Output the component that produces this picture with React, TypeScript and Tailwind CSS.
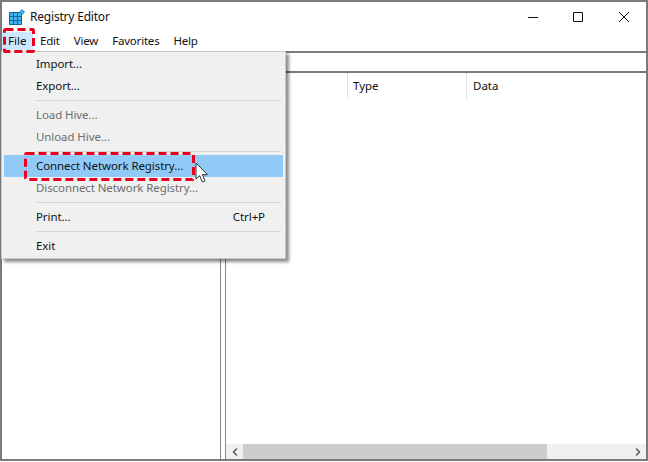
import { ChevronLeft, ChevronRight } from "lucide-react";

const menuBar = ["Edit", "View", "Favorites", "Help"];

function Separator() {
  return <div className="ml-[32px] mr-[2px] my-[3px] h-px bg-[#d4d4d4]" />;
}

function MenuItem({
  label,
  disabled,
  active,
  shortcut,
}: {
  label: string;
  disabled?: boolean;
  active?: boolean;
  shortcut?: string;
}) {
  return (
    <div
      className={`flex h-[22px] items-center justify-between pl-[32px] pr-[18px] tracking-[-0.09px] ${
        active ? "bg-[#91c9f7]" : ""
      } ${disabled ? "text-[#6d6d6d]" : "text-[#111]"}`}
    >
      <span>{label}</span>
      {shortcut && <span>{shortcut}</span>}
    </div>
  );
}

function RegistryIcon() {
  return (
    <svg width="16" height="16" viewBox="0 0 16 16" className="shrink-0">
      <path d="M0 3h13v13H0z" fill="#3fb4ee" />
      <path d="M.5 3.5h12v12H.5zM4.5 3v13M8.5 3v13M0 7.5h13M0 11.5h13" fill="none" stroke="#12659f" strokeWidth="1" />
      <path d="M13 0l3 3-3 3-3-3z" fill="#2a8fd0" />
      <path d="M13 2l1 1-1 1-1-1z" fill="#a9dcf7" />
    </svg>
  );
}

function WindowControls() {
  return (
    <div className="ml-auto flex items-center pr-[17px]">
      <svg width="10" height="10" viewBox="0 0 10 10">
        <path d="M0 5.5h10" stroke="#111" strokeWidth="1" />
      </svg>
      <svg width="10" height="10" viewBox="0 0 10 10" className="ml-[35px]">
        <path d="M.5.5h9v9h-9z" fill="none" stroke="#111" strokeWidth="1" />
      </svg>
      <svg width="10" height="10" viewBox="0 0 10 10" className="ml-[36px]">
        <path d="M0 0l10 10M10 0L0 10" stroke="#111" strokeWidth="1" />
      </svg>
    </div>
  );
}

function CursorIcon() {
  return (
    <svg width="14" height="22" viewBox="0 0 14 22" className="absolute left-[195px] top-[162px]">
      <path
        d="M1 1v16l3.6-3.4 2.8 6.4 2.6-1.1-2.7-6.2h5.2z"
        fill="#fff"
        stroke="#333"
        strokeWidth="1"
      />
    </svg>
  );
}

// hand-drawn annotation box, longer dashes than a css dashed border
function Callout({ className, w, h }: { className: string; w: number; h: number }) {
  return (
    <svg width={w} height={h} viewBox={`0 0 ${w} ${h}`} className={`absolute ${className}`}>
      <rect
        x="1.5"
        y="1.5"
        width={w - 3}
        height={h - 3}
        rx="1"
        fill="none"
        stroke="#e8001c"
        strokeWidth="3"
        strokeDasharray="8 4"
      />
    </svg>
  );
}

export default function App() {
  return (
    <div className="relative h-[462px] w-[648px] overflow-hidden bg-white font-['Noto_Sans',sans-serif] text-[11.5px] text-[#111]">
      <div className="flex h-[461px] w-[648px] flex-col border-2 border-[#7a7a7a]">
        <div className="flex h-[29px] shrink-0 items-center pl-[7px]">
          <RegistryIcon />
          <span className="ml-[5px] text-[12px] tracking-[-0.2px]">Registry Editor</span>
          <WindowControls />
        </div>
        <div className="flex h-[20px] shrink-0 items-center">
          <div className="flex h-[18px] w-[31px] items-center bg-[#cce8ff] pl-[6px]">File</div>
          <div className="ml-[7px] flex gap-[14px] tracking-[-0.2px]">
            {menuBar.map((item) => (
              <span key={item}>{item}</span>
            ))}
          </div>
        </div>
        <div className="h-[22px] shrink-0 border-b-2 border-t-2 border-[#7a7a7a]" />
        <div className="flex min-h-0 flex-1">
          <div className="w-[219px] shrink-0 border-r border-[#8a8a8a]" />
          <div className="w-[4px] shrink-0 bg-white" />
          <div className="flex min-w-0 flex-1 flex-col border-l border-[#8a8a8a]">
            <div className="flex h-[26px] shrink-0 items-center">
              <div className="h-full w-[122px] border-r border-[#e0e0e0]" />
              <div className="flex h-full w-[119px] items-center border-r border-[#e0e0e0] pl-[5px]">Type</div>
              <div className="pl-[6px]">Data</div>
            </div>
            <div className="flex-1" />
            <div className="flex h-[15px] shrink-0 items-center justify-between bg-[#f0f0f0] text-[#555]">
              <ChevronLeft size={12} strokeWidth={3} className="ml-[3px]" />
              <div className="ml-[2px] mr-auto h-full w-[304px] bg-[#cdcdcd]" />
              <ChevronRight size={12} strokeWidth={3} className="mr-[2px]" />
            </div>
          </div>
        </div>
      </div>

      <div className="absolute left-[1px] top-[51px] w-[285px] border border-[#c8c8c8] bg-[#f0f0f0] px-[2px] py-[1px] shadow-[3px_3px_3px_rgba(0,0,0,0.45)]">
        <MenuItem label="Import..." />
        <MenuItem label="Export..." />
        <Separator />
        <MenuItem label="Load Hive..." disabled />
        <MenuItem label="Unload Hive..." disabled />
        <Separator />
        <MenuItem label="Connect Network Registry..." active />
        <MenuItem label="Disconnect Network Registry..." disabled />
        <Separator />
        <MenuItem label="Print..." shortcut="Ctrl+P" />
        <Separator />
        <MenuItem label="Exit" />
      </div>

      <Callout className="left-[3px] top-[28px]" w={32} h={25} />
      <Callout className="left-[24px] top-[152px]" w={171} h={29} />
      <CursorIcon />
    </div>
  );
}
